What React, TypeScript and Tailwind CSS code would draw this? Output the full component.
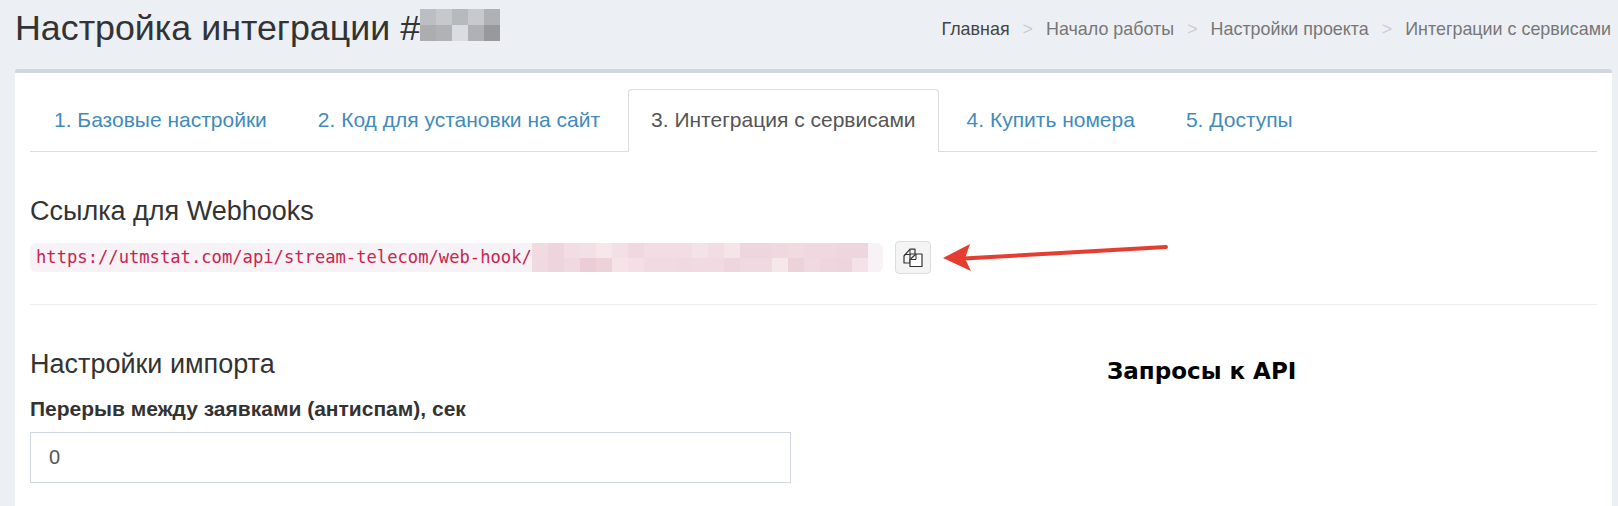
const sans = "font-['Liberation_Sans',Arial,sans-serif]";

const titleMosaic = [
  "#bcbfc1", "#c6c9cc", "#b7babd", "#c6c9cd", "#afb2b5",
  "#abadaf", "#b0b2b5", "#d9dce3", "#b0b1b4", "#98999c",
];

const urlMosaic = [
  "#f0dbe1", "#eed4dc", "#f1dde3", "#f3e0e6", "#f6e7ea", "#f3e0e6", "#efd8df", "#f1dde3", "#f1dde3", "#f1dde3", "#f3e2e7", "#f1dde3", "#f5e5e9", "#eed6de", "#eed6de", "#efd8df", "#f0dbe1", "#efd8df", "#efd8df", "#eed6de", "#eed6de",
  "#f0d9e0", "#eed4dc", "#f0d9e0", "#ecccd6", "#eed2da", "#f5e3e8", "#f3dfe5", "#f1dae1", "#f1dae1", "#f0d9e0", "#f1dae1", "#f1dae1", "#efd5dd", "#f0d9e0", "#f0d9e0", "#f6e7ea", "#eed2da", "#f0d9e0", "#efd5dd", "#eed4dc", "#f3e2e7",
];

const tabs = [
  "1. Базовые настройки",
  "2. Код для установки на сайт",
  "3. Интеграция с сервисами",
  "4. Купить номера",
  "5. Доступы",
];

const crumbs = ["Главная", "Начало работы", "Настройки проекта", "Интеграции с сервисами"];

function CopyIcon() {
  return (
    <svg width="20" height="20" viewBox="0 0 20 20" fill="none" stroke="#333" strokeWidth="1.2" strokeLinejoin="round">
      <path d="M1 8L7 1.2H12V6H7V15H1Z" fill="#f4f4f4" />
      <path d="M7 1.5V6.5H1.5" strokeWidth="1" />
      <path d="M13 6H19V18.5H7V11.5Z" fill="#fff" />
      <path d="M13 6V11.5H7.5" strokeWidth="1" />
    </svg>
  );
}

function Arrow() {
  return (
    <svg className="absolute left-[940px] top-[240px]" width="232" height="36" viewBox="0 0 232 36" fill="none">
      <path d="M24 18.5L226 7" stroke="#e53d30" strokeWidth="4" strokeLinecap="round" />
      <path d="M3 18L30 4L25 18.5L31 31Z" fill="#e53d30" />
    </svg>
  );
}

export default function App() {
  return (
    <div className={`relative h-[506px] overflow-hidden bg-[#ecf0f5] text-[#333] ${sans}`}>
      <div className="flex h-[69px] items-start justify-between pl-[15px] pr-[7px]">
        <h1 className="mt-[6px] flex items-start text-[35.8px] font-normal leading-[44px]">
          Настройка интеграции #
          <span className="mt-[3px] grid w-[80px] grid-cols-5">
            {titleMosaic.map((c, i) => (
              <span key={i} className="h-4" style={{ backgroundColor: c }} />
            ))}
          </span>
        </h1>
        <div className="mt-[19px] flex items-center text-[17.9px] leading-[20px] text-[#777]">
          {crumbs.map((c, i) => (
            <span key={c} className="flex items-center">
              {i > 0 && <span className="px-[13px] text-[#ccc]">&gt;</span>}
              <span className={i === 0 ? "text-[#444]" : ""}>{c}</span>
            </span>
          ))}
        </div>
      </div>

      <div className="ml-[15px] mr-[6px] h-[437px] rounded-t-[3px] border-t-4 border-[#d2d6de] bg-white pl-[15px] pr-[15px] pt-[16px]">
        <div className="flex h-[63px] gap-[1px] border-b border-[#ddd]">
          {tabs.map((t, i) => (
            <div
              key={t}
              className={
                i === 2
                  ? "mx-[2px] mb-[-1px] h-[63px] rounded-t-[4px] border border-b-0 border-[#ddd] bg-white px-[22px] pt-[17px] text-[21px] leading-[26px] text-[#555]"
                  : i === 0
                    ? "pl-[24px] pr-[25px] pt-[18px] text-[21px] leading-[26px] text-[#428bba]"
                    : "px-[25px] pt-[18px] text-[21px] leading-[26px] text-[#428bba]"
              }
            >
              {t}
            </div>
          ))}
        </div>

        <h3 className="mt-[44px] text-[27px] font-normal leading-[30px]">Ссылка для Webhooks</h3>

        <div className="mt-[15px] flex items-center">
          <code className="flex h-[29px] w-[853px] items-center rounded-[6px] bg-[#f7f2f5] pl-[6px] font-['DejaVu_Sans_Mono',monospace] text-[17.17px] text-[#c7254e]">
            <span>https://utmstat.com/api/stream-telecom/web-hook/</span>
            <span className="grid h-[29px] w-[336px] shrink-0 grid-cols-21 grid-rows-2">
              {urlMosaic.map((c, i) => (
                <span key={i} style={{ backgroundColor: c }} />
              ))}
            </span>
          </code>
          <button className="ml-[12px] flex h-[33px] w-[36px] items-center justify-center rounded-[4px] border border-[#ddd] bg-[#f4f4f4]">
            <CopyIcon />
          </button>
        </div>

        <div className="mt-[30px] border-t border-[#eee]" />

        <div className="mt-[41px] flex">
          <div className="w-[761px]">
            <h4 className="text-[27px] font-normal leading-[36px]">Настройки импорта</h4>
            <div className="mt-[16px] text-[21px] font-bold leading-[22px]">Перерыв между заявками (антиспам), сек</div>
            <input
              readOnly
              value="0"
              className="mt-[12px] block h-[51px] w-[761px] border border-[#d2d6de] bg-white px-[18px] text-[20px] text-[#555] outline-none"
            />
          </div>
          <div className="ml-[316px] mt-[10px] font-['DejaVu_Sans',sans-serif] text-[23px] font-bold leading-[30px] text-black">
            Запросы к API
          </div>
        </div>
      </div>

      <Arrow />
    </div>
  );
}
